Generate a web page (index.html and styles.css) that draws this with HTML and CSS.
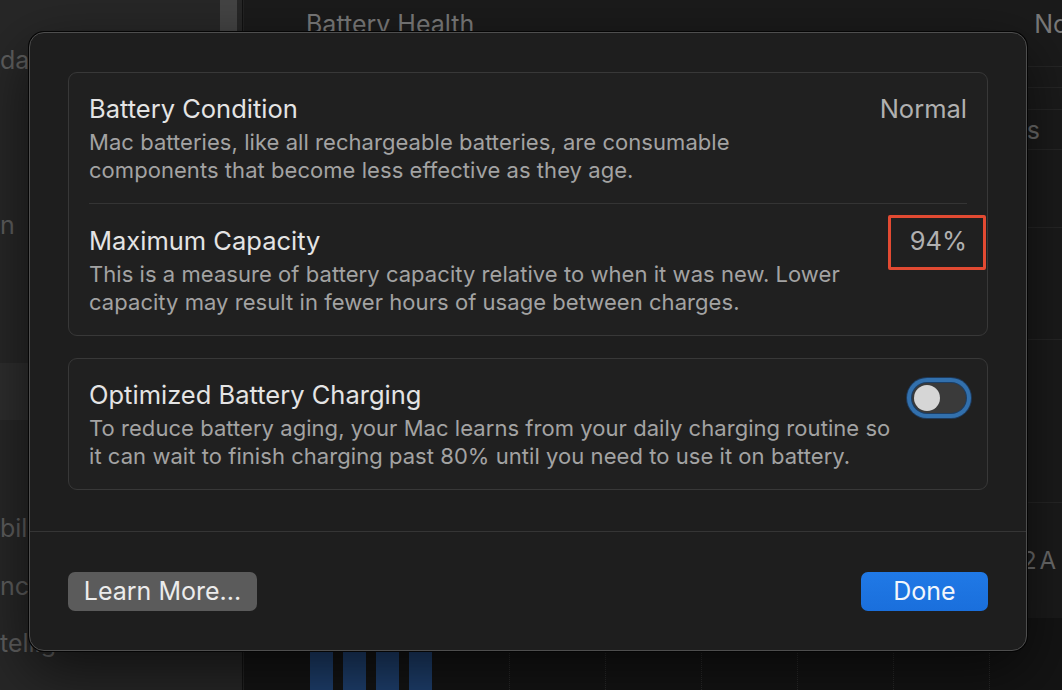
FILE: index.html
```html
<!DOCTYPE html>
<html>
<head>
<meta charset="utf-8">
<link rel="stylesheet" href="styles.css">
</head>
<body>
<div class="app">
  <aside class="sidebar">
    <div class="scroll-thumb"></div>
    <div class="side-item s1">dat</div>
    <div class="side-item s2">n</div>
    <div class="side-sel"></div>
    <div class="side-item s4">bilit</div>
    <div class="side-item s5">nc</div>
    <div class="side-item s6">tellig</div>
  </aside>
  <main class="main">
    <div class="mrow head"><span>Battery Health</span><span class="rt">No</span></div>
    <div class="mrow r1"></div>
    <div class="mrow r2"></div>
    <div class="mrow r3"><span></span><span class="rt">s</span></div>
    <div class="mrow r4"></div>
    <div class="mrow r5"></div>
    <div class="mrow r6"></div>
    <div class="mrow r7"><span></span><span class="rt amp">2 A</span></div>
    <div class="chart">
      <div class="bars">
        <div class="bar"></div><div class="bar"></div><div class="bar"></div><div class="bar"></div>
      </div>
      <div class="grid"><i></i><i></i><i></i><i></i><i></i><i></i></div>
    </div>
  </main>
</div>

<div class="dialog">
  <div class="dialog-body">
    <section class="group">
      <div class="row">
        <div class="text">
          <div class="title">Battery Condition</div>
          <div class="desc">Mac batteries, like all rechargeable batteries, are consumable<br>components that become less effective as they age.</div>
        </div>
        <div class="value">Normal</div>
      </div>
      <div class="row second">
        <div class="text">
          <div class="title">Maximum Capacity</div>
          <div class="desc">This is a measure of battery capacity relative to when it was new. Lower<br>capacity may result in fewer hours of usage between charges.</div>
        </div>
        <div class="value marked">94%</div>
      </div>
    </section>
    <section class="group">
      <div class="row">
        <div class="text">
          <div class="title">Optimized Battery Charging</div>
          <div class="desc">To reduce battery aging, your Mac learns from your daily charging routine so<br>it can wait to finish charging past 80% until you need to use it on battery.</div>
        </div>
        <div class="toggle"><div class="knob"></div></div>
      </div>
    </section>
  </div>
  <div class="dialog-foot">
    <button class="btn secondary">Learn More...</button>
    <button class="btn primary">Done</button>
  </div>
</div>
</body>
</html>
```
FILE: styles.css
```css
* { box-sizing: border-box; }
html, body { margin: 0; padding: 0; }
body {
  width: 1062px;
  height: 690px;
  overflow: hidden;
  position: relative;
  background: #1b1b1b;
  font-family: Inter, "Noto Sans", sans-serif;
}
.app {
  display: grid;
  grid-template-columns: 243px 1fr;
  height: 690px;
}
.sidebar {
  position: relative;
  background: #272727;
  border-right: 1px solid #111;
  display: flex;
  flex-direction: column;
  overflow: hidden;
}
.scroll-thumb {
  position: absolute;
  left: 220px;
  top: 0;
  width: 17px;
  height: 40px;
  background: #444;
}
.side-item {
  height: 40px;
  line-height: 40px;
  font-size: 25px;
  color: #5e5e5e;
  white-space: nowrap;
}
.s1 { margin-top: 40px; }
.s2 { margin-top: 125px; }
.side-sel { margin-top: 118px; height: 57px; background: #2e2e2e; }
.s4 { margin-top: 88px; }
.s5 { margin-top: 18px; }
.s6 { margin-top: 17px; }

.main {
  display: flex;
  flex-direction: column;
  padding-left: 44px;
  border-left: 1px solid #232323;
  overflow: hidden;
}
.mrow {
  display: flex;
  justify-content: space-between;
  align-items: center;
  padding-left: 18px;
  padding-right: 2px;
  border-bottom: 1px solid #262626;
  color: #6e6e6e;
  font-size: 25px;
  white-space: nowrap;
}
.head { height: 67px; align-items: flex-start; padding-top: 9px; padding-right: 0; color: #7a7a7a; }
.head .rt { margin-right: -6px; }
.r1 { height: 21px; }
.r2 { height: 22px; }
.r3 { height: 40px; padding-right: 22px; }
.r4 { height: 78px; }
.r5 { height: 112px; }
.r6 { height: 163px; }
.r7 { height: 115px; border-bottom: none; padding-right: 6px; }
.amp { word-spacing: -4px; font-size: 24px; }
.chart {
  flex: 1;
  position: relative;
  background: #141414;
  margin-left: -44px;
  padding-left: 66px;
  display: flex;
  align-items: flex-end;
}
.bars { display: flex; gap: 10px; align-items: flex-end; }
.bar { width: 23px; height: 60px; background: #1e3f6d; }
.grid {
  position: absolute;
  left: 0; top: 0; right: 0; bottom: 0;
  display: flex;
  padding-left: 265px;
  gap: 95px;
}
.grid i { width: 1px; height: 100%; border-left: 1px dotted #2a2a2a; }

/* dialog */
.dialog {
  position: absolute;
  left: 29px;
  top: 32px;
  width: 998px;
  height: 619px;
  background: #1e1e1e;
  border: 1px solid #4e4e4e;
  border-radius: 15px;
  box-shadow: 0 0 0 1px #050505, 0 20px 60px rgba(0,0,0,0.6);
  display: flex;
  flex-direction: column;
}
.dialog-body {
  padding: 39px 38px 41px;
  display: flex;
  flex-direction: column;
  gap: 22px;
  border-bottom: 1px solid #353535;
}
.group {
  border: 1px solid #383838;
  border-radius: 9px;
  background: #202020;
  display: flex;
  flex-direction: column;
}
.row {
  display: flex;
  justify-content: space-between;
  align-items: flex-start;
  padding: 22px 20px 19px;
}
.row.second {
  padding-top: 23px;
  border-top: 1px solid #343434;
  margin: 0 20px;
  padding-left: 0;
  padding-right: 0;
}
.title {
  font-size: 25.5px;
  line-height: 28px;
  color: #e4e4e4;
}
.desc {
  margin-top: 5px;
  font-size: 22px;
  letter-spacing: 0.05px;
  line-height: 28px;
  color: #a3a3a3;
}
.value {
  font-size: 25.5px;
  line-height: 28px;
  color: #b0b0b0;
}
.marked { position: relative; }
.marked::after {
  content: "";
  position: absolute;
  left: -22px;
  right: -19px;
  top: -12px;
  bottom: -15px;
  border: 3px solid #e24a32;
  border-radius: 2px;
}
.toggle {
  margin-top: 2px;
  margin-right: 1px;
  width: 54px;
  height: 30px;
  border-radius: 15px;
  background: #3a3a3a;
  box-shadow: 0 0 0 1px #1c3f66, 0 0 0 5px #3270ad, 0 0 0 6px #1d3a5c;
  padding: 2px;
  display: flex;
}
.knob {
  width: 26px;
  height: 26px;
  border-radius: 50%;
  background: #d6d6d6;
}
.dialog-foot {
  flex: 1;
  display: flex;
  justify-content: space-between;
  align-items: center;
  padding: 0 38px;
}
.btn {
  font-family: Inter, "Noto Sans", sans-serif;
  font-size: 25px;
  height: 39px;
  border: none;
  border-radius: 7px;
  color: #ececec;
  padding: 0;
}
.secondary { width: 189px; background: #5b5b5b; }
.primary { width: 127px; background: linear-gradient(#2079e6, #1a6fdc); color: #f2f6fc; }
```
